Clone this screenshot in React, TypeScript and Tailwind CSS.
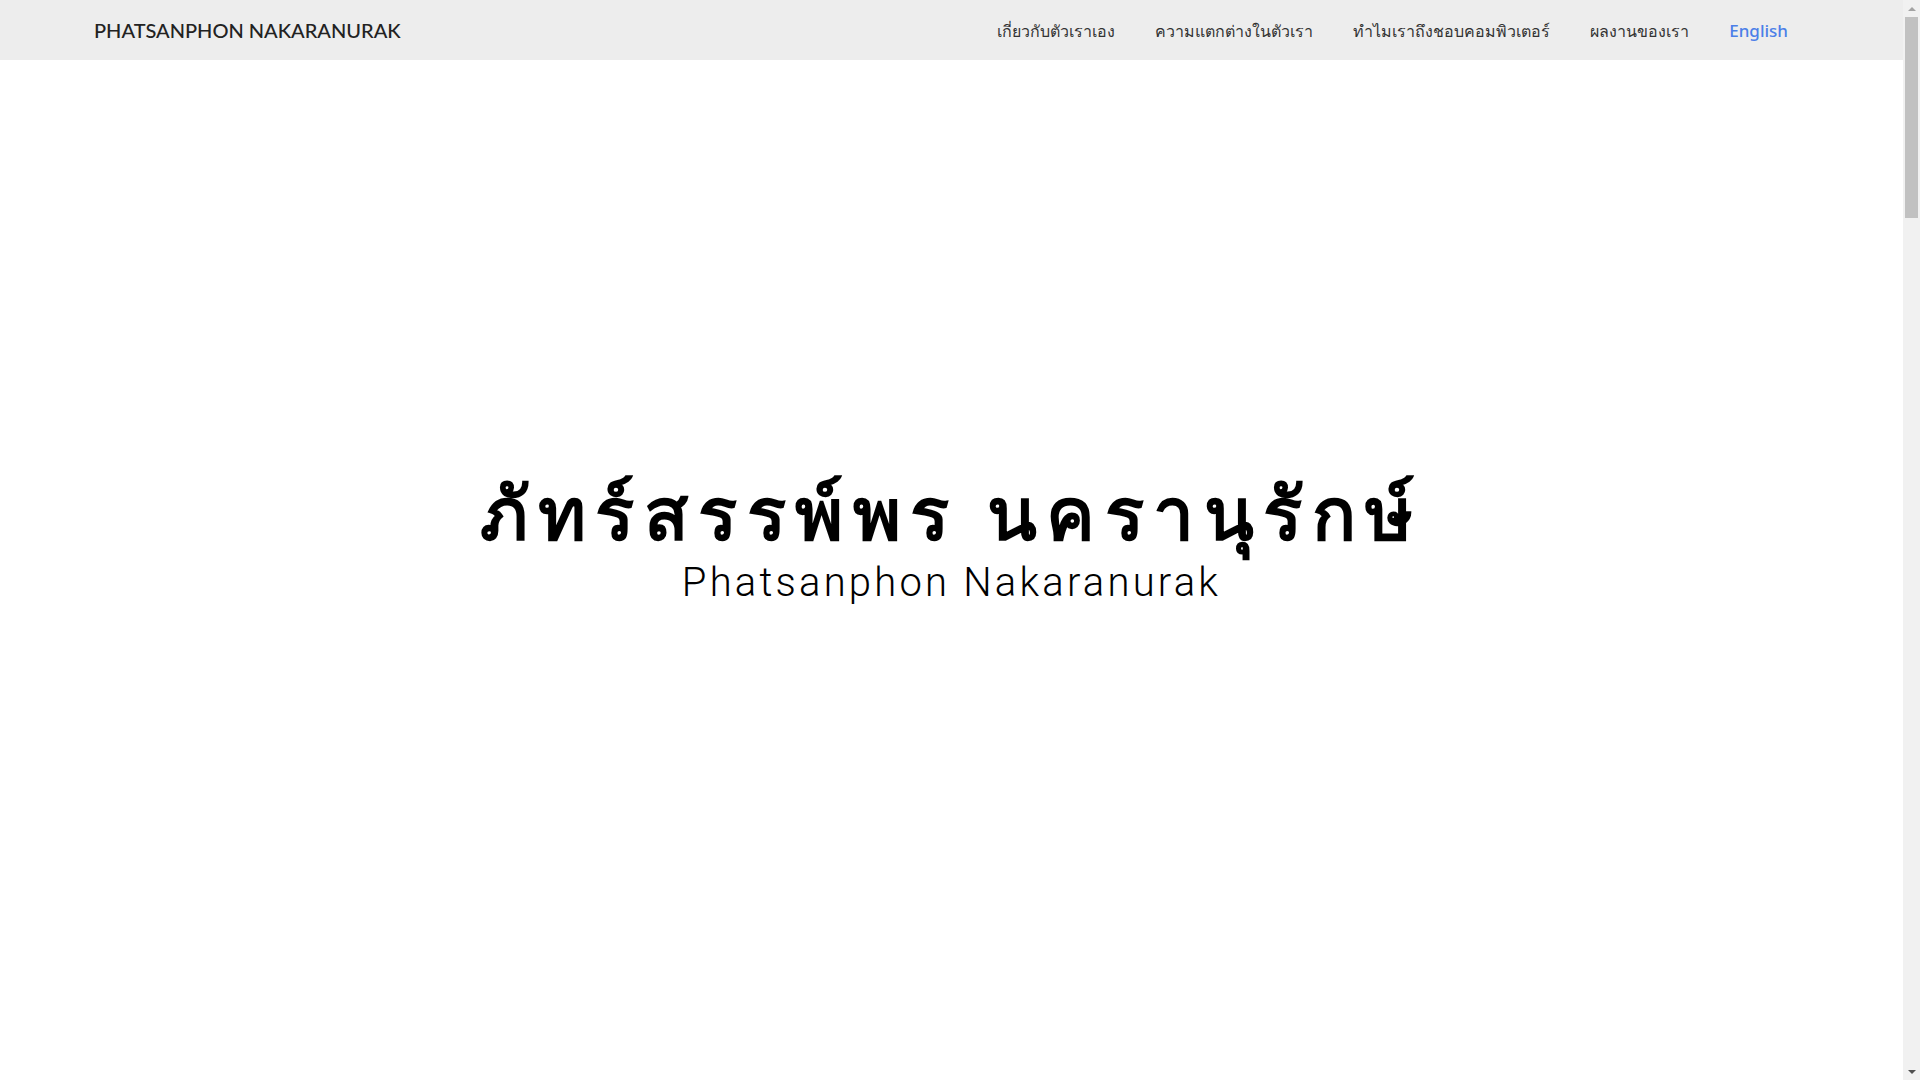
const links = [
  { label: "เกี่ยวกับตัวเราเอง", href: "#about" },
  { label: "ความแตกต่างในตัวเรา", href: "#different" },
  { label: "ทำไมเราถึงชอบคอมพิวเตอร์", href: "#computer" },
  { label: "ผลงานของเรา", href: "#works" },
];

const Navbar = () => (
  <nav className="fixed left-0 right-[17px] top-0 z-20 h-[60px] bg-[#ededed]">
    <div className="flex h-full items-center justify-between pl-[94px] pr-[115px]">
      <a
        href="#"
        className="text-[20px] font-medium text-[#222]"
        style={{ fontFamily: "Lato, 'Noto Sans', sans-serif" }}
      >
        PHATSANPHON NAKARANURAK
      </a>
      <ul className="flex items-center gap-[40px] pt-[2px] text-[16px] text-[#333]">
        {links.map((l) => (
          <li key={l.href}>
            <a href={l.href}>{l.label}</a>
          </li>
        ))}
        <li>
          <a href="#" className="text-[17px] font-medium text-[#4b7fe8]">
            English
          </a>
        </li>
      </ul>
    </div>
  </nav>
);

const Hero = () => (
  <header className="flex h-screen flex-col items-center justify-center text-black">
    <h1
      className="text-[73px] font-semibold leading-[1.1] tracking-[0.13em]"
      style={{ fontFamily: "'Noto Sans', 'DejaVu Sans', sans-serif" }}
    >
      ภัทร์สรรพ์พร นครานุรักษ์
    </h1>
    <p
      className="mt-[6px] text-[40px] font-light leading-tight tracking-[0.08em]"
      style={{ fontFamily: "Roboto, sans-serif" }}
    >
      Phatsanphon Nakaranurak
    </p>
  </header>
);

const Section = ({ id, title }: { id: string; title: string }) => (
  <section id={id} className="flex h-[1130px] items-center justify-center">
    <h2 className="text-4xl text-gray-800">{title}</h2>
  </section>
);

// the window's scrollbar, drawn since the capture hides the native one
const ScrollBar = () => (
  <aside className="flex h-screen w-[17px] shrink-0 flex-col bg-[#f1f1f1]">
    <div className="flex h-[17px] items-center justify-center">
      <div className="h-0 w-0 border-x-[4px] border-b-[4px] border-x-transparent border-b-[#a3a3a3]" />
    </div>
    <div className="flex-1 px-[2px]">
      <div className="h-[201px] bg-[#c1c1c1]" />
    </div>
    <div className="flex h-[17px] items-center justify-center">
      <div className="h-0 w-0 border-x-[4px] border-t-[4px] border-x-transparent border-t-[#505050]" />
    </div>
  </aside>
);

export default function App() {
  return (
    <div className="flex h-screen overflow-hidden bg-white" style={{ fontFamily: "'Noto Sans', sans-serif" }}>
      <main className="flex-1 overflow-y-auto [scrollbar-width:none]">
        <Navbar />
        <Hero />
        <Section id="about" title="เกี่ยวกับตัวเราเอง" />
        <Section id="different" title="ความแตกต่างในตัวเรา" />
        <Section id="computer" title="ทำไมเราถึงชอบคอมพิวเตอร์" />
        <Section id="works" title="ผลงานของเรา" />
      </main>
      <ScrollBar />
    </div>
  );
}
